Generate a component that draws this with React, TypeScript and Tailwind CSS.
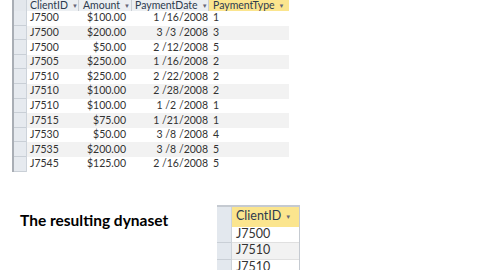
import React from 'react';

const rows: [string, string, string, string][] = [
  ['J7500', '$100.00', '1 /16/2008', '1'],
  ['J7500', '$200.00', '3 /3 /2008', '3'],
  ['J7500', '$50.00', '2 /12/2008', '5'],
  ['J7505', '$250.00', '1 /16/2008', '2'],
  ['J7510', '$250.00', '2 /22/2008', '2'],
  ['J7510', '$100.00', '2 /28/2008', '2'],
  ['J7510', '$100.00', '1 /2 /2008', '1'],
  ['J7515', '$75.00', '1 /21/2008', '1'],
  ['J7530', '$50.00', '3 /8 /2008', '4'],
  ['J7535', '$200.00', '3 /8 /2008', '5'],
  ['J7545', '$125.00', '2 /16/2008', '5'],
];

const Arrow = () => <span className="ml-[4px] text-[6px] text-[#667]">▼</span>;

const App: React.FC = () => {
  return (
    <div className="w-[480px] h-[270px] overflow-hidden bg-white text-[#333]" style={{ fontFamily: 'Lato, "Open Sans", sans-serif' }}>
      <div className="ml-[12px] flex border-l-2 border-[#a9aeb5] w-[277px]">
        <div className="w-[13px] bg-[#e6eaef] border-r border-[#cdd3da] flex flex-col">
          <div className="h-[11px] bg-[#e3e7ec]" />
          {rows.map((_, i) => (
            <div key={i} className="h-[14.6px] border-b border-[#c9cfd6]" />
          ))}
        </div>
        <div className="flex-1 flex flex-col text-[10.5px]">
          <div className="flex h-[11px] items-center leading-none text-[#2d3b4e]">
            <div className="w-[52px] pl-[3px] bg-[#eceff2] h-full flex items-center border-r border-[#c9ced4]">ClientID<Arrow /></div>
            <div className="w-[53px] pl-[4px] bg-[#eceff2] h-full flex items-center border-r border-[#c9ced4]">Amount<Arrow /></div>
            <div className="w-[77px] pl-[3px] bg-[#eceff2] h-full flex items-center border-r border-[#c9ced4]">PaymentDate<Arrow /></div>
            <div className="flex-1 pl-[4px] bg-[#fbe58e] h-full flex items-center">PaymentType<Arrow /></div>
          </div>
          {rows.map((r, i) => (
            <div key={i} className={`flex h-[14.6px] items-center ${i % 2 === 0 ? 'bg-white' : 'bg-[#f2f2f2]'}`}>
              <div className="w-[52px] pl-[3px]">{r[0]}</div>
              <div className="w-[53px] pr-[6px] text-right">{r[1]}</div>
              <div className="w-[77px] pr-[1px] text-right whitespace-pre">{r[2]}</div>
              <div className="flex-1 pl-[4px]">{r[3]}</div>
            </div>
          ))}
        </div>
      </div>
      <div className="mt-[33px] flex">
        <div className="ml-[20px] w-[197px] pt-[4px] text-[15.5px] font-bold text-black">
          The resulting dynaset
        </div>
        <div className="w-[83px] border-t-2 border-r border-[#c5cad1] flex text-[12.5px]">
          <div className="w-[15px] bg-[#e3e8ee] border-r border-[#cdd3da] flex flex-col">
            <div className="h-[20px]" />
            <div className="h-[16.5px] border-b border-[#c9cfd6]" />
            <div className="h-[16.5px] border-b border-[#c9cfd6]" />
            <div className="h-[16.5px]" />
          </div>
          <div className="flex-1 flex flex-col">
            <div className="h-[20px] bg-[#fbe58e] flex items-center pl-[4px] text-[#2d3b4e]">ClientID<Arrow /></div>
            <div className="h-[16.5px] flex items-center pl-[4px] border-b border-[#e0e0e0]">J7500</div>
            <div className="h-[16.5px] flex items-center pl-[4px] bg-[#f2f2f2] border-b border-[#e0e0e0]">J7510</div>
            <div className="h-[16.5px] flex items-center pl-[4px]">J7510</div>
          </div>
        </div>
      </div>
    </div>
  );
};

export default App;
